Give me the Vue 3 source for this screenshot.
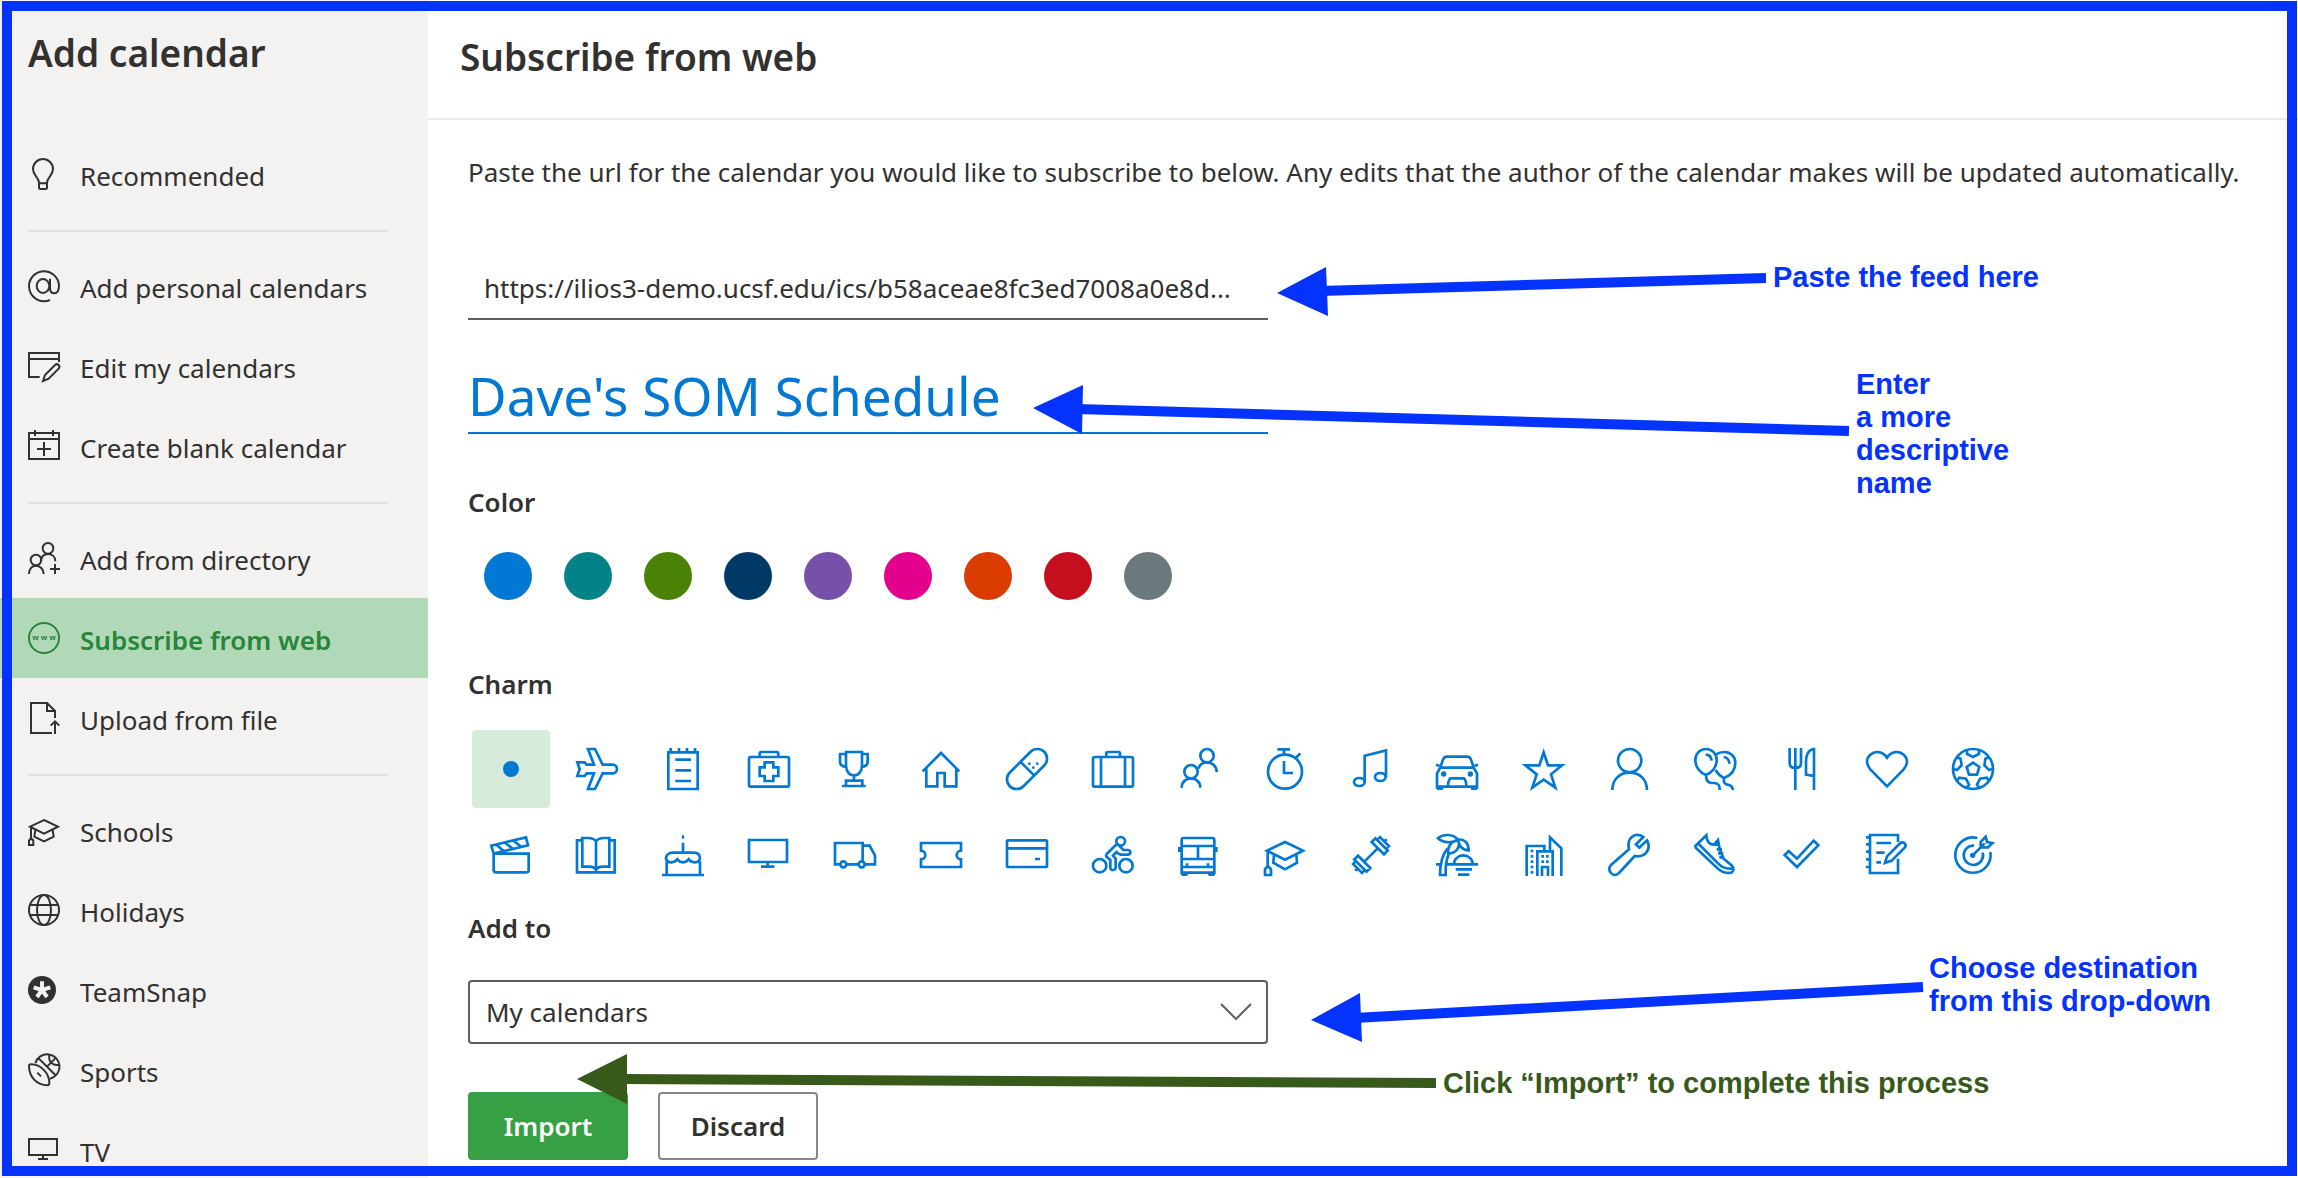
<script setup>
import { ref } from 'vue'

// Navigation glyphs live on a 96-unit grid.
const navGroups = [
  [
    {
      label: 'Recommended',
      icon: '<path d="M33 74C33 58 15 54 15 33a30 30 0 0 1 60 0C75 54 57 58 57 74V89q0 4-4 4H37q-4 0-4-4ZM33 76H57"/>',
    },
  ],
  [
    {
      label: 'Add personal calendars',
      icon: '<path d="M66 90A45 45 0 1 1 93 46C93 61 88 70 79 70C70 70 66 64 66 54V26"/><ellipse cx="45" cy="48" rx="19" ry="21"/>',
    },
    {
      label: 'Edit my calendars',
      icon: '<path d="M35 81H3V9H93V36M3 27H93M45 93L51 75L81 45q6-5 11 0t0 11L62 86Z"/>',
    },
    {
      label: 'Create blank calendar',
      icon: '<path d="M3 9H93V87H3ZM3 27H93M21 0V18M75 0V18M48 36V78M27 57H69"/>',
    },
  ],
  [
    {
      label: 'Add from directory',
      icon: '<circle cx="60" cy="19" r="16"/><path d="M38 58c2-14 10-22 22-22s22 8 22 22"/><circle cx="24" cy="54" r="16"/><path d="M3 96c0-15 9-25 21-25s23 10 23 25M81 66V96M66 81H96"/>',
    },
    {
      label: 'Subscribe from web',
      icon: '<circle cx="48" cy="48" r="45"/><text x="48" y="54" text-anchor="middle" font-size="23" font-weight="700" fill="currentColor" stroke="none">w w w</text>',
    },
    {
      label: 'Upload from file',
      icon: '<path d="M81 48V27L57 3H9V93H72M57 3V27H81M81 96V58M68 71L81 58L94 71"/>',
    },
  ],
  [
    {
      label: 'Schools',
      icon: '<path d="M48 18L90 38L48 59L6 38ZM22 48L19 68L48 82L77 68L74 48M9 40V76M3 93V80L6 76H13L16 80V93Z"/>',
    },
    {
      label: 'Holidays',
      icon: '<circle cx="48" cy="48" r="45"/><ellipse cx="48" cy="48" rx="21" ry="45"/><path d="M6 33H90M6 63H90"/>',
    },
    {
      label: 'TeamSnap',
      icon: '<circle cx="42" cy="48" r="42" fill="currentColor" stroke="none"/><path d="M42 48V22M42 48L67 40M42 48L57 69M42 48L27 69M42 48L17 40" stroke="#f3f2f0" stroke-width="12"/>',
    },
    {
      label: 'Sports',
      icon: '<path d="M3 36C3 33 5 31 8 31C40 31 64 58 64 88C64 92 62 94 58 94C28 94 3 70 3 36ZM22 28A37 37 0 1 1 66 74M32 13L82 63M57 38L84 11M93 32C76 36 60 24 64 3M28 56L39 67"/>',
    },
    {
      label: 'TV',
      icon: '<path d="M3 15H87V63H3ZM45 63V75M30 75H60"/>',
    },
  ],
]
const current = 'Subscribe from web'

const colors = [
  { name: 'Blue', value: '#0078d4' },
  { name: 'Teal', value: '#038387' },
  { name: 'Green', value: '#498205' },
  { name: 'Navy', value: '#003966' },
  { name: 'Purple', value: '#7750a9' },
  { name: 'Pink', value: '#e3008c' },
  { name: 'Orange', value: '#da3b01' },
  { name: 'Red', value: '#c50f1f' },
  { name: 'Gray', value: '#69797e' },
]

// Charm glyphs live on a 126-unit grid.
const solid = 'fill="currentColor" stroke="none"'
const patch = [0, 72, 144, 216, 288]
  .map((a) => `<path d="M45 8V18L63 27L81 18V8" transform="rotate(${a} 63 63)"/>`)
  .join('')
const dots = (points, size) =>
  points.map(([x, y]) => `<rect x="${x - size / 2}" y="${y - size / 2}" width="${size}" height="${size}" ${solid}/>`).join('')

const charms = [
  { name: 'None', icon: `<circle cx="63" cy="63" r="24" ${solid}/>` },
  {
    name: 'Airplane',
    icon: '<path d="M36 3H57L80 50H110a12 12 0 0 1 0 26H80L57 123H36L54 76H32L26 84H4L11 63L4 43H26L32 50H54Z"/>',
  },
  { name: 'Notepad', icon: '<path d="M19 13H107V123H19ZM26 0V13M51 0V13M75 0V13M99 0V13M40 35H87M40 67H87M40 99H87"/>' },
  {
    name: 'First aid',
    icon: '<rect x="3" y="27" width="120" height="89" rx="6"/><path d="M35 26V17q0-5 5-5H86q5 0 5 5V26M50 43H76V58H91V84H76V99H50V84H35V58H50Z"/>',
  },
  {
    name: 'Trophy',
    icon: '<path d="M36 12H84V52c0 18-10 30-24 30S36 70 36 52ZM36 18H18V40c0 10 6 16 20 17M84 18H101V40c0 10-6 16-19 17M60 82V98M36 115V98H85V115M24 114H95"/>',
  },
  { name: 'Home', icon: '<path d="M8 70L63 15L118 70M19 60V115H52V75H74V115H109V60"/>' },
  {
    name: 'Bandage',
    icon: `<rect x="-10" y="34" width="146" height="58" rx="29" transform="rotate(-45 63 63)"/><path d="M43 41L84 82"/><circle cx="70" cy="47" r="4" ${solid}/><circle cx="94" cy="47" r="4" ${solid}/><circle cx="82" cy="59" r="4" ${solid}/>`,
  },
  {
    name: 'Suitcase',
    icon: '<rect x="3" y="27" width="120" height="89" rx="6"/><path d="M27 27V116M99 27V116M43 26V16q0-4 4-4H80q4 0 4 4V26"/>',
  },
  {
    name: 'People',
    icon: '<circle cx="87" cy="23" r="20"/><path d="M61 62c4-12 14-19 26-19 16 0 29 12 29 29"/><circle cx="39" cy="71" r="20"/><path d="M11 119c0-16 12-28 28-28s28 12 28 28"/>',
  },
  { name: 'Stopwatch', icon: '<circle cx="63" cy="71" r="51"/><path d="M40 4H78M60 4V20M109 16L95 30M60 39V75H87"/>' },
  {
    name: 'Music',
    icon: '<path d="M44 102V23L108 7V87"/><ellipse cx="28" cy="102" rx="16" ry="12"/><ellipse cx="91" cy="87" rx="16" ry="12"/>',
  },
  {
    name: 'Car',
    icon: `<path d="M13 58L21 35q3-9 12-9H94q8 0 11 9L113 58M3 116V76L13 59H113L123 76V116ZM0 50L10 53M126 50L116 53M36 114Q36 98 43 91H84Q91 98 91 114"/><circle cx="23" cy="78" r="8" ${solid}/><circle cx="103" cy="78" r="8" ${solid}/><path d="M0 114H24L20 126H6L0 122ZM126 114H102L106 126H120L126 122Z" ${solid}/>`,
  },
  { name: 'Star', icon: '<path d="M65 13L78 52H120L87 79L100 119L65 95L31 119L44 79L10 52H52Z"/>' },
  { name: 'Person', icon: '<circle cx="65" cy="38" r="35"/><path d="M13 126c0-32 22-52 52-52s52 20 52 52"/>' },
  {
    name: 'Balloons',
    icon: '<path d="M36 3c18 0 32 14 32 33 0 22-14 37-32 45C18 73 4 58 4 36 4 17 18 3 36 3ZM67 19C74 14 81 12 91 12c19 0 33 14 33 32 0 22-14 38-33 46-12-5-20-13-26-24M36 82c0 14 5 22 16 23h10c10 1 16 9 15 21M90 92c-2 10 2 16 11 18s16 6 15 16M35 20c10 0 17 6 18 18M89 27c10 1 16 8 18 20"/>',
  },
  {
    name: 'Dining',
    icon: '<path d="M29 0V46c0 9 6 14 17 14s17-5 17-14V0M46 0V126M102 126V3C86 5 78 20 78 44V80L102 84"/>',
  },
  {
    name: 'Heart',
    icon: '<path d="M63 115L13 64C0 50 0 32 12 21C27 7 50 9 63 29C76 9 99 7 114 21C126 32 126 50 113 64Z"/>',
  },
  { name: 'Soccer', icon: `<circle cx="63" cy="63" r="60"/><path d="M63 44L82 57L75 80H51L44 57Z"/>${patch}` },
  {
    name: 'Movie',
    icon: '<path d="M11 59H116V109q0 6-7 6H18q-7 0-7-7ZM11 59L4 35L108 10L114 34L11 59M20 33L40 50M46 27L67 43M71 21L92 37"/>',
  },
  {
    name: 'Book',
    icon: '<path d="M18 19H3V115H116V19H101M60 22C54 13 44 12 36 12H19V98H40C50 98 57 102 60 108C63 102 70 98 80 98H100V12H84C76 12 66 13 60 22V108"/>',
  },
  {
    name: 'Cake',
    icon: `<path d="M0 123H126M14 82V123M114 82V123M12 74c0-12 9-18 20-18H95c12 0 19 6 19 18-3 8-9 11-16 11-8 0-14-3-18-9-4 6-10 9-17 9s-13-3-17-9c-4 6-10 9-18 9-7 0-13-3-16-11ZM63 26V56"/><ellipse cx="63" cy="9" rx="4" ry="6" ${solid}/>`,
  },
  { name: 'Monitor', icon: '<path d="M3 18H117V84H3ZM59 84V98M39 98H79"/>' },
  {
    name: 'Truck',
    icon: '<path d="M18 91H3V27H86V80M86 35H107L123 65V91H93M73 91H38"/><circle cx="28" cy="91" r="9"/><circle cx="83" cy="91" r="9"/>',
  },
  { name: 'Ticket', icon: '<path d="M3 27H123V50a13 13 0 0 0 0 26V99H3V76a13 13 0 0 0 0-26Z"/>' },
  { name: 'Card', icon: '<rect x="3" y="19" width="120" height="80" rx="4"/><path d="M3 43H123M87 75H102"/>' },
  {
    name: 'Cycling',
    icon: '<circle cx="23" cy="95" r="20"/><circle cx="102" cy="95" r="20"/><circle cx="86" cy="22" r="13"/><path d="M74 31L44 60q-4 5 1 10l10 8v24q1 6 8 6 7 0 8-7V74l-8-9 11-11q6 7 12 8h22q7-1 7-7t-7-7H94L78 31Z"/>',
  },
  {
    name: 'Bus',
    icon: `<path d="M16 12H103q6 0 6 6V116H11V18q0-6 5-6ZM11 36H109M11 75H109M11 99H109M60 36V75M27 99V88M90 99V88"/><path d="M0 39H11V54H0ZM109 39H119V54H109ZM9 115H30V122L26 126H12L9 122ZM90 115H111V122L108 126H94L90 122Z" ${solid}/>`,
  },
  {
    name: 'Graduation',
    icon: '<path d="M63 24L117 50L63 77L9 50ZM30 63L28 86L63 106L99 86L97 63M11 52V99M3 123V106L8 99H15L21 106V123Z"/>',
  },
  {
    name: 'Fitness',
    icon: '<g transform="rotate(-45 63 63)"><path d="M34 63H92M92 37H108V89H92ZM108 44H120V82H108ZM120 63H130M34 37H18V89H34ZM18 44H6V82H18ZM6 63H-4"/></g>',
  },
  {
    name: 'Beach',
    icon: '<path d="M6 13C20 0 50 -2 66 17C50 28 22 28 6 13ZM66 17C86 14 98 28 98 49C80 48 68 36 66 17ZM66 18C76 38 60 58 37 59C34 42 42 22 66 18ZM34 44C16 66 12 90 12 123H29C28 100 30 80 38 60M54 90a28 26 0 0 1 56 0M0 91H14M30 91H126M59 106H108M66 122H100"/>',
  },
  {
    name: 'City',
    icon: `<path d="M14 126V36H67V52M46 126V52H92V126M60 126V99H78V126M84 52V10L118 43V126"/>${dots([[30, 51], [30, 67], [30, 83], [30, 99], [30, 115], [62, 67], [76, 67], [62, 83], [76, 83]], 8)}`,
  },
  {
    name: 'Wrench',
    icon: '<path d="M63 46L9 93q-10 12 0 24t24 0L80 66C98 70 116 62 121 44C124 34 121 26 117 19L94 41L84 31L106 9C96 1 82 1 73 8C62 16 59 30 63 46Z"/>',
  },
  {
    name: 'Running',
    icon: '<path d="M4 36L37 4C38 20 44 32 60 32L72 18L77 46L89 74L114 95C120 102 120 112 112 116C96 119 84 114 72 104L6 42ZM14 30L76 92C86 102 96 105 116 104M60 32L77 32M68 46H84M72 58H88M76 70H90"/>',
  },
  { name: 'Check', icon: '<path d="M14 63L26 51L51 74L101 20L115 34L51 99Z"/>' },
  {
    name: 'Notebook',
    icon: '<path d="M96 24V3H12V117H96V74M0 10H12M0 31H12M0 53H12M0 76H12M0 99H12M31 27H75M31 56H56M31 85H45M57 87L63 67L102 28q8-6 14 0t0 13L77 80Z"/>',
  },
  {
    name: 'Goal',
    icon: `<path d="M76 12A53 53 0 1 0 115 54M66 35A29 29 0 1 0 92 56M62 64L98 28M86 40V24L101 8L105 24L121 27L108 40Z"/><circle cx="62" cy="64" r="8" ${solid}/>`,
  },
]

const feedUrl = ref('https://ilios3-demo.ucsf.edu/ics/b58aceae8fc3ed7008a0e8d...')
const calendarName = ref("Dave's SOM Schedule")
const color = ref('Blue')
const charm = ref('None')
const destination = ref('My calendars')
</script>

<template>
  <div class="app">
    <aside class="sidebar">
      <h1 class="sidebar-title">Add calendar</h1>
      <nav>
        <ul v-for="(group, i) in navGroups" :key="i" class="nav-group">
          <li v-for="item in group" :key="item.label">
            <a href="#" class="nav-item" :class="{ active: item.label === current }">
              <svg class="nav-icon" viewBox="0 0 96 96" aria-hidden="true" v-html="item.icon"></svg>
              <span>{{ item.label }}</span>
            </a>
          </li>
        </ul>
      </nav>
    </aside>

    <main class="main">
      <header class="header">
        <h2>Subscribe from web</h2>
      </header>
      <form class="form" @submit.prevent>
        <p class="intro">
          Paste the url for the calendar you would like to subscribe to below. Any edits that the author of the
          calendar makes will be updated automatically.
        </p>
        <input v-model="feedUrl" class="field url" type="text" aria-label="Calendar url" />
        <input v-model="calendarName" class="field name" type="text" aria-label="Calendar name" />

        <fieldset class="colors">
          <legend class="label">Color</legend>
          <div class="color-row">
            <input
              v-for="c in colors"
              :key="c.name"
              v-model="color"
              class="swatch"
              type="radio"
              name="color"
              :value="c.name"
              :aria-label="c.name"
              :style="{ background: c.value }"
            />
          </div>
        </fieldset>

        <fieldset class="charms">
          <legend class="label">Charm</legend>
          <div class="charm-grid">
            <label v-for="c in charms" :key="c.name" class="charm" :class="{ selected: charm === c.name }">
              <input v-model="charm" class="charm-input" type="radio" name="charm" :value="c.name" :aria-label="c.name" />
              <svg class="charm-icon" viewBox="0 0 126 126" aria-hidden="true" v-html="c.icon"></svg>
            </label>
          </div>
        </fieldset>

        <label class="label add-to" for="destination">Add to</label>
        <div class="select-wrap">
          <select id="destination" v-model="destination" class="select">
            <option>My calendars</option>
          </select>
          <svg class="chevron" viewBox="0 0 32 18" aria-hidden="true"><path d="M1 1L16 16L31 1" /></svg>
        </div>

        <div class="actions">
          <button class="btn primary" type="submit">Import</button>
          <button class="btn" type="button">Discard</button>
        </div>
      </form>
    </main>

    <div class="annotations">
      <svg class="arrows" width="2298" height="1178" aria-hidden="true">
        <g class="arrow-blue">
          <path d="M1277 293L1326 267L1328 316Z" />
          <path class="shaft" d="M1320 291L1766 278" />
          <path d="M1033 408L1083 385L1082 434Z" />
          <path class="shaft" d="M1076 409L1849 431" />
          <path d="M1311 1020L1360 993L1362 1042Z" />
          <path class="shaft" d="M1354 1018L1923 987" />
        </g>
        <g class="arrow-green">
          <path d="M577 1079L627 1054L627 1104Z" />
          <path class="shaft" d="M620 1079L1436 1083" />
        </g>
      </svg>
      <p class="note note-feed">Paste the feed here</p>
      <p class="note note-name">Enter<br />a more<br />descriptive<br />name</p>
      <p class="note note-destination">Choose destination<br />from this drop-down</p>
      <p class="note note-import">Click “Import” to complete this process</p>
    </div>
    <div class="frame"></div>
  </div>
</template>

<style>
body {
  margin: 0;
}
</style>

<style scoped>
.app {
  position: relative;
  display: flex;
  height: 100vh;
  overflow: hidden;
  background: #fff;
  color: #323130;
  font-family: 'Noto Sans', 'Open Sans', sans-serif;
  font-size: 26px;
  line-height: 40px;
}

.sidebar {
  flex: none;
  box-sizing: border-box;
  width: 428px;
  background: #f3f2f0;
  overflow: hidden;
}

.sidebar-title,
.header h2 {
  margin: 0;
  font-size: 37px;
  font-weight: 600;
  line-height: 52px;
}

.sidebar-title {
  padding: 27px 28px 55px;
}

.nav-group {
  margin: 0;
  padding: 0;
  list-style: none;
}

.nav-group + .nav-group::before {
  content: '';
  display: block;
  height: 2px;
  margin: 16px 40px 14px 28px;
  background: #e1dfdd;
}

.nav-item {
  display: flex;
  align-items: center;
  gap: 20px;
  height: 80px;
  padding-left: 28px;
  color: inherit;
  text-decoration: none;
  white-space: nowrap;
}

.nav-item span {
  padding-top: 4px;
}

.nav-item.active {
  background: #b1d9b8;
  color: #27863a;
  font-weight: 600;
}

.nav-icon {
  flex: none;
  width: 32px;
  height: 32px;
  overflow: visible;
  fill: none;
  stroke: currentColor;
  stroke-width: 6;
}

.main {
  flex: 1;
  min-width: 0;
}

.header {
  padding: 31px 32px 35px;
  border-bottom: 2px solid #eaeaea;
}

.form {
  padding: 32px 40px 0;
}

.intro {
  margin: 0;
  white-space: nowrap;
}

.field {
  display: block;
  box-sizing: border-box;
  width: 800px;
  border: 0;
  border-bottom: 2px solid #605e5c;
  outline: 0;
  background: transparent;
  color: inherit;
  font: inherit;
}

.url {
  height: 62px;
  margin-top: 66px;
  padding: 0 16px;
}

.name {
  height: 76px;
  margin-top: 38px;
  padding: 0;
  border-color: #0078d4;
  color: #0078d4;
  font-size: 53px;
}

fieldset {
  min-width: 0;
  margin: 0;
  padding: 0;
  border: 0;
}

.label {
  display: block;
  padding: 0;
  font-weight: 600;
}

.colors {
  margin-top: 48px;
}

.color-row {
  display: flex;
  gap: 32px;
  margin-top: 30px;
  padding-left: 16px;
}

.swatch {
  appearance: none;
  width: 48px;
  height: 48px;
  margin: 0;
  border-radius: 50%;
}

.charms {
  margin-top: 64px;
}

.charm-grid {
  display: grid;
  grid-template-columns: repeat(18, 78px);
  gap: 8px;
  margin-top: 26px;
  padding-left: 4px;
}

.charm {
  position: relative;
  display: flex;
  align-items: center;
  justify-content: center;
  height: 78px;
  border-radius: 4px;
}

.charm.selected {
  background: #d6ebda;
}

.charm-input {
  position: absolute;
  inset: 0;
  width: 100%;
  height: 100%;
  margin: 0;
  opacity: 0;
}

.charm-icon {
  width: 42px;
  height: 42px;
  overflow: visible;
  color: #0078d4;
  fill: none;
  stroke: currentColor;
  stroke-width: 8;
}

.add-to {
  margin-top: 14px;
}

.select-wrap {
  position: relative;
  width: 800px;
  margin-top: 32px;
}

.select {
  appearance: none;
  display: block;
  box-sizing: border-box;
  width: 100%;
  height: 64px;
  padding: 0 60px 0 16px;
  border: 2px solid #605e5c;
  border-radius: 4px;
  background: #fff;
  color: inherit;
  font: inherit;
}

.chevron {
  position: absolute;
  top: 23px;
  right: 16px;
  width: 32px;
  height: 18px;
  fill: none;
  stroke: #605e5c;
  stroke-width: 2;
  pointer-events: none;
}

.actions {
  display: flex;
  gap: 30px;
  margin-top: 48px;
}

.btn {
  box-sizing: border-box;
  width: 160px;
  height: 68px;
  padding: 0;
  border: 2px solid #8a8886;
  border-radius: 4px;
  background: #fff;
  color: inherit;
  font: inherit;
  font-weight: 600;
}

.btn.primary {
  border-color: #37a045;
  background: #37a045;
  color: #fff;
}

/* Callouts drawn over the page */
.annotations {
  position: absolute;
  inset: 0;
  pointer-events: none;
}

.arrows {
  position: absolute;
  top: 0;
  left: 0;
}

.arrow-blue {
  fill: #0432ff;
  stroke: #0432ff;
}

.arrow-green {
  fill: #375a1b;
  stroke: #375a1b;
}

.arrows path {
  stroke-width: 0;
}

.arrows .shaft {
  stroke-width: 10;
}

.note {
  position: absolute;
  margin: 0;
  color: #0432ff;
  font-family: 'Liberation Sans', Arial, sans-serif;
  font-size: 29px;
  font-weight: 700;
  line-height: 33px;
  white-space: nowrap;
}

.note-feed {
  top: 261px;
  left: 1773px;
}

.note-name {
  top: 368px;
  left: 1856px;
}

.note-destination {
  top: 952px;
  left: 1929px;
}

.note-import {
  top: 1067px;
  left: 1443px;
  color: #375a1b;
}

.frame {
  position: absolute;
  inset: 1px 1px 2px 2px;
  border: 10px solid #0432ff;
  pointer-events: none;
}
</style>
